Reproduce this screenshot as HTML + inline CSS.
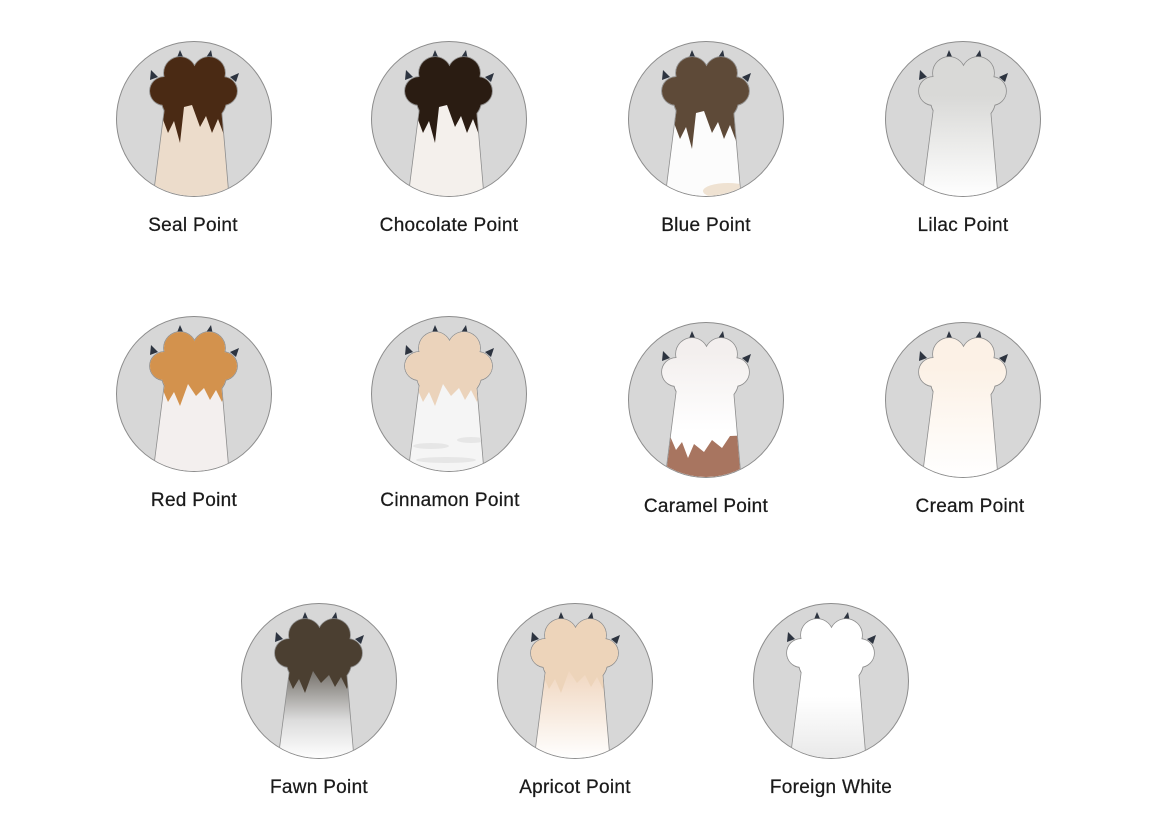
<!DOCTYPE html>
<html><head><meta charset="utf-8"><style>
html,body{margin:0;padding:0;background:#fff;width:1158px;height:826px;overflow:hidden}
svg{display:block}
text{font-family:"Liberation Sans",sans-serif;font-size:19px;fill:#1a1a1a;text-anchor:middle;letter-spacing:0.3px;stroke:#1a1a1a;stroke-width:0.25px}
</style></head><body>
<svg width="1158" height="826" viewBox="0 0 1158 826" xmlns="http://www.w3.org/2000/svg">
<defs>
<g id="pawshape">
<circle cx="64" cy="32" r="16"/><circle cx="93" cy="32" r="16"/>
<circle cx="48" cy="50" r="14"/><circle cx="107" cy="50" r="14"/>
<ellipse cx="78" cy="60" rx="32" ry="24"/>
<path d="M49,66 L105,66 L113,160 L37,160 Z"/>
</g>
<clipPath id="circ"><circle cx="78" cy="78" r="77"/></clipPath>
<clipPath id="paw">
<circle cx="64" cy="32" r="16"/><circle cx="93" cy="32" r="16"/>
<circle cx="48" cy="50" r="14"/><circle cx="107" cy="50" r="14"/>
<ellipse cx="78" cy="60" rx="32" ry="24"/>
<path d="M49,66 L105,66 L113,160 L37,160 Z"/>
</clipPath>
<g id="claws" fill="#2d3440">
<path d="M60,19 L64,9 L68,18 Z"/><path d="M89,18 L95,9 L97,19 Z"/>
<path d="M34,39 L35,29 L42,36 Z"/><path d="M114,36 L123,32 L120,41 Z"/>
</g>
<path id="drip" d="M0,0 H156 V76 L112,74 L108,94 L102,78 L96,92 L90,75 L84,86 L76,64 L68,66 L64,102 L58,80 L52,92 L46,76 L0,76 Z"/>
<path id="dripS" d="M0,0 H156 V72 L110,70 L106,86 L100,74 L94,84 L88,72 L80,80 L72,68 L64,90 L58,76 L52,86 L46,72 L0,72 Z"/>
<linearGradient id="gLilac" x1="0" y1="0" x2="0" y2="1"><stop offset="0.35" stop-color="#d9d9d7"/><stop offset="1" stop-color="#ffffff"/></linearGradient>
<linearGradient id="gCream" x1="0" y1="0" x2="0" y2="1"><stop offset="0.3" stop-color="#fcf1e6"/><stop offset="1" stop-color="#ffffff"/></linearGradient>
<linearGradient id="gFawn" x1="0" y1="0" x2="0" y2="1"><stop offset="0.45" stop-color="#7a7670"/><stop offset="0.75" stop-color="#dcdcdc"/><stop offset="1" stop-color="#ffffff"/></linearGradient>
<linearGradient id="gApri" x1="0" y1="0" x2="0" y2="1"><stop offset="0.45" stop-color="#f1d8c2"/><stop offset="1" stop-color="#ffffff"/></linearGradient>
<linearGradient id="gWhite" x1="0" y1="0" x2="0" y2="1"><stop offset="0.6" stop-color="#ffffff"/><stop offset="1" stop-color="#e9e9e9"/></linearGradient>
<linearGradient id="gCara" x1="0" y1="0" x2="0" y2="1"><stop offset="0.2" stop-color="#f3efee"/><stop offset="0.7" stop-color="#ffffff"/></linearGradient>
<g id="base">
<circle cx="78" cy="78" r="77.5" fill="#d7d7d7" stroke="#8c8c8c" stroke-width="1"/>
</g>
<g id="outline" clip-path="url(#circ)" fill="#fff" stroke="#8e8e8e" stroke-width="1.6"><use href="#pawshape"/></g>
</defs>

<g transform="translate(116,41)"><use href="#base"/><use href="#claws"/><use href="#outline"/>
<g clip-path="url(#circ)"><g clip-path="url(#paw)"><rect width="156" height="156" fill="#ecdccb"/><use href="#drip" fill="#4a2a14"/></g></g></g>
<text x="193" y="231">Seal Point</text>

<g transform="translate(371,41)"><use href="#base"/><use href="#claws"/><use href="#outline"/>
<g clip-path="url(#circ)"><g clip-path="url(#paw)"><rect width="156" height="156" fill="#f4f0ec"/><use href="#drip" fill="#2a1c12"/></g></g></g>
<text x="449" y="231">Chocolate Point</text>

<g transform="translate(628,41)"><use href="#base"/><use href="#claws"/><use href="#outline"/>
<g clip-path="url(#circ)"><g clip-path="url(#paw)"><rect width="156" height="156" fill="#fcfcfc"/><ellipse cx="100" cy="150" rx="25" ry="8" fill="#efe2d2"/><use href="#drip" fill="#5e4a38" transform="translate(0,6)"/></g></g></g>
<text x="706" y="231">Blue Point</text>

<g transform="translate(885,41)"><use href="#base"/><use href="#claws"/><use href="#outline"/>
<g clip-path="url(#circ)"><g clip-path="url(#paw)"><rect width="156" height="156" fill="url(#gLilac)"/></g></g></g>
<text x="963" y="231">Lilac Point</text>

<g transform="translate(116,316)"><use href="#base"/><use href="#claws"/><use href="#outline"/>
<g clip-path="url(#circ)"><g clip-path="url(#paw)"><rect width="156" height="156" fill="#f3efee"/><use href="#dripS" fill="#d3924d"/></g></g></g>
<text x="194" y="506">Red Point</text>

<g transform="translate(371,316)"><use href="#base"/><use href="#claws"/><use href="#outline"/>
<g clip-path="url(#circ)"><g clip-path="url(#paw)"><rect width="156" height="156" fill="#f5f5f5"/><ellipse cx="60" cy="130" rx="18" ry="3" fill="#e6e6e6"/><ellipse cx="100" cy="124" rx="14" ry="3" fill="#e6e6e6"/><ellipse cx="75" cy="144" rx="30" ry="3" fill="#e6e6e6"/><use href="#dripS" fill="#ebd3bb"/></g></g></g>
<text x="450" y="506">Cinnamon Point</text>

<g transform="translate(628,322)"><use href="#base"/><use href="#claws"/><use href="#outline"/>
<g clip-path="url(#circ)"><g clip-path="url(#paw)"><rect width="156" height="156" fill="url(#gCara)"/><path d="M0,156 V116 L42,114 L48,128 L54,120 L60,136 L66,122 L76,130 L84,118 L94,126 L102,114 L156,112 V156 Z" fill="#a87560"/></g></g></g>
<text x="706" y="512">Caramel Point</text>

<g transform="translate(885,322)"><use href="#base"/><use href="#claws"/><use href="#outline"/>
<g clip-path="url(#circ)"><g clip-path="url(#paw)"><rect width="156" height="156" fill="url(#gCream)"/></g></g></g>
<text x="970" y="512">Cream Point</text>

<g transform="translate(241,603)"><use href="#base"/><use href="#claws"/><use href="#outline"/>
<g clip-path="url(#circ)"><g clip-path="url(#paw)"><rect width="156" height="156" fill="url(#gFawn)"/><use href="#dripS" fill="#4b3f31"/></g></g></g>
<text x="319" y="793">Fawn Point</text>

<g transform="translate(497,603)"><use href="#base"/><use href="#claws"/><use href="#outline"/>
<g clip-path="url(#circ)"><g clip-path="url(#paw)"><rect width="156" height="156" fill="url(#gApri)"/><use href="#dripS" fill="#edd4ba"/></g></g></g>
<text x="575" y="793">Apricot Point</text>

<g transform="translate(753,603)"><use href="#base"/><use href="#claws"/><use href="#outline"/>
<g clip-path="url(#circ)"><g clip-path="url(#paw)"><rect width="156" height="156" fill="url(#gWhite)"/></g></g></g>
<text x="831" y="793">Foreign White</text>
</svg>
</body></html>
